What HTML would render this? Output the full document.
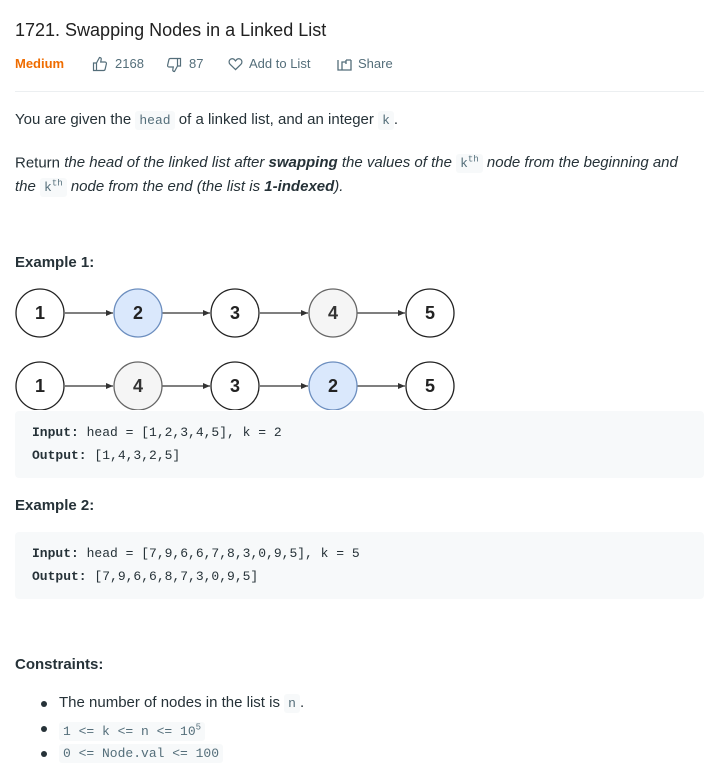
<!DOCTYPE html>
<html><head><meta charset="utf-8"><style>
*{margin:0;padding:0;box-sizing:border-box}
body{width:717px;height:783px;background:#fff;font-family:"Liberation Sans",sans-serif;color:#263238;position:relative;overflow:hidden}
.a{position:absolute;white-space:nowrap}
.t{font-size:15px;line-height:20px}
code{font-family:"Liberation Mono",monospace;font-size:13px;background:#f7f9fa;color:#546e7a;padding:2px 4px;border-radius:3px;font-style:normal}
.pre{position:absolute;left:15px;width:689px;height:67px;background:#f7f9fa;border-radius:4px;font-family:"Liberation Mono",monospace;font-size:13px;color:#263238}
.pre div{position:absolute;left:17px;white-space:pre}
.meta{font-size:13px;color:#546e7a;top:56px;line-height:16px}
h4{font-size:15px;font-weight:bold}
.dot{position:absolute;width:6px;height:6px;border-radius:50%;background:#263238;left:41px}
</style></head><body>
<div class="a" style="left:15px;top:19px;font-size:18px;line-height:22px;color:#212121">1721. Swapping Nodes in a Linked List</div>
<div class="a meta" style="left:15px;color:#ef6c00;font-weight:bold">Medium</div>
<svg class="a" style="left:92px;top:56px" width="16" height="16" viewBox="0 0 16 16" fill="none" stroke="#546e7a" stroke-width="1.2"><path d="M1.5 7h3v7.5h-3z M4.5 7l3-5.5c1.3 0 2 .8 1.7 2L8.7 6h4.3c1 0 1.6.9 1.4 1.8l-1.3 5.5c-.2.8-.8 1.2-1.5 1.2H4.5"/></svg>
<div class="a meta" style="left:115px">2168</div>
<svg class="a" style="left:166px;top:57px" width="16" height="16" viewBox="0 0 16 16" fill="none" stroke="#546e7a" stroke-width="1.2"><path d="M14.5 9h-3V1.5h3z M11.5 9l-3 5.5c-1.3 0-2-.8-1.7-2L7.3 10H3c-1 0-1.6-.9-1.4-1.8l1.3-5.5c.2-.8.8-1.2 1.5-1.2h7.1"/></svg>
<div class="a meta" style="left:189px">87</div>
<svg class="a" style="left:228px;top:57px" width="15" height="14" viewBox="0 0 16 15" fill="none" stroke="#546e7a" stroke-width="1.3"><path d="M8 13.5L2.2 7.8C.6 6.2.8 3.6 2.6 2.4c1.6-1 3.6-.6 4.6.8L8 4.2l.8-1c1-1.4 3-1.8 4.6-.8 1.8 1.2 2 3.8.4 5.4z"/></svg>
<div class="a meta" style="left:249px">Add to List</div>
<svg class="a" style="left:337px;top:57px" width="16" height="14" viewBox="0 0 16 14" fill="none" stroke="#546e7a" stroke-width="1.3"><path d="M1 3v10h13V3 M5 13V5h4 M9 3v4 M9 3h5"/></svg>
<div class="a meta" style="left:358px">Share</div>
<div class="a" style="left:15px;top:91px;width:689px;height:1px;background:#eceff1"></div>
<div class="a t" style="left:15px;top:110px">You are given the <code>head</code> of a linked list, and an integer <code>k</code>.</div>
<div class="a t" style="left:15px;top:150px">Return <i>the head of the linked list after <b>swapping</b> the values of the <code>k<sup style="font-size:9px">th</sup></code> node from the beginning and</i></div>
<div class="a t" style="left:15px;top:174px"><i>the <code>k<sup style="font-size:9px">th</sup></code> node from the end (the list is <b>1-indexed</b>).</i></div>
<h4 class="a" style="left:15px;top:254px">Example 1:</h4>
<svg class="a" style="left:0;top:285px" width="470" height="125" viewBox="0 0 470 125">
<defs><marker id="ar" markerWidth="8" markerHeight="8" refX="7" refY="4" orient="auto" markerUnits="userSpaceOnUse"><path d="M0 1L7 4L0 7z" fill="#333"/></marker></defs>
<g stroke="#333" stroke-width="1.2" marker-end="url(#ar)">
<line x1="65" y1="28" x2="113" y2="28"/><line x1="162" y1="28" x2="210" y2="28"/><line x1="260" y1="28" x2="308" y2="28"/><line x1="357" y1="28" x2="405" y2="28"/>
<line x1="65" y1="101" x2="113" y2="101"/><line x1="162" y1="101" x2="210" y2="101"/><line x1="260" y1="101" x2="308" y2="101"/><line x1="357" y1="101" x2="405" y2="101"/>
</g>
<g stroke-width="1.3" font-family="Liberation Sans,sans-serif" font-weight="bold" font-size="18" text-anchor="middle">
<circle cx="40" cy="28" r="24" fill="#fff" stroke="#222"/><circle cx="138" cy="28" r="24" fill="#dae8fc" stroke="#6c8ebf"/><circle cx="235" cy="28" r="24" fill="#fff" stroke="#222"/><circle cx="333" cy="28" r="24" fill="#f5f5f5" stroke="#666"/><circle cx="430" cy="28" r="24" fill="#fff" stroke="#222"/>
<circle cx="40" cy="101" r="24" fill="#fff" stroke="#222"/><circle cx="138" cy="101" r="24" fill="#f5f5f5" stroke="#666"/><circle cx="235" cy="101" r="24" fill="#fff" stroke="#222"/><circle cx="333" cy="101" r="24" fill="#dae8fc" stroke="#6c8ebf"/><circle cx="430" cy="101" r="24" fill="#fff" stroke="#222"/>
<g fill="#222" stroke="none"><text x="40" y="34">1</text><text x="138" y="34">2</text><text x="235" y="34">3</text><text x="333" y="34" fill="#333">4</text><text x="430" y="34">5</text>
<text x="40" y="107">1</text><text x="138" y="107" fill="#333">4</text><text x="235" y="107">3</text><text x="333" y="107">2</text><text x="430" y="107">5</text></g></g>
</svg>
<div class="pre" style="top:411px"><div style="top:14px"><b>Input:</b> head = [1,2,3,4,5], k = 2</div><div style="top:37px"><b>Output:</b> [1,4,3,2,5]</div></div>
<h4 class="a" style="left:15px;top:497px">Example 2:</h4>
<div class="pre" style="top:532px"><div style="top:14px"><b>Input:</b> head = [7,9,6,6,7,8,3,0,9,5], k = 5</div><div style="top:37px"><b>Output:</b> [7,9,6,6,8,7,3,0,9,5]</div></div>
<h4 class="a" style="left:15px;top:656px">Constraints:</h4>
<div class="dot" style="top:701px"></div><div class="dot" style="top:726px"></div><div class="dot" style="top:751px"></div>
<div class="a t" style="left:59px;top:693px">The number of nodes in the list is <code>n</code>.</div>
<div class="a t" style="left:59px;top:718px"><code>1 &lt;= k &lt;= n &lt;= 10<sup style="font-size:9px">5</sup></code></div>
<div class="a t" style="left:59px;top:743px"><code>0 &lt;= Node.val &lt;= 100</code></div>
</body></html>
